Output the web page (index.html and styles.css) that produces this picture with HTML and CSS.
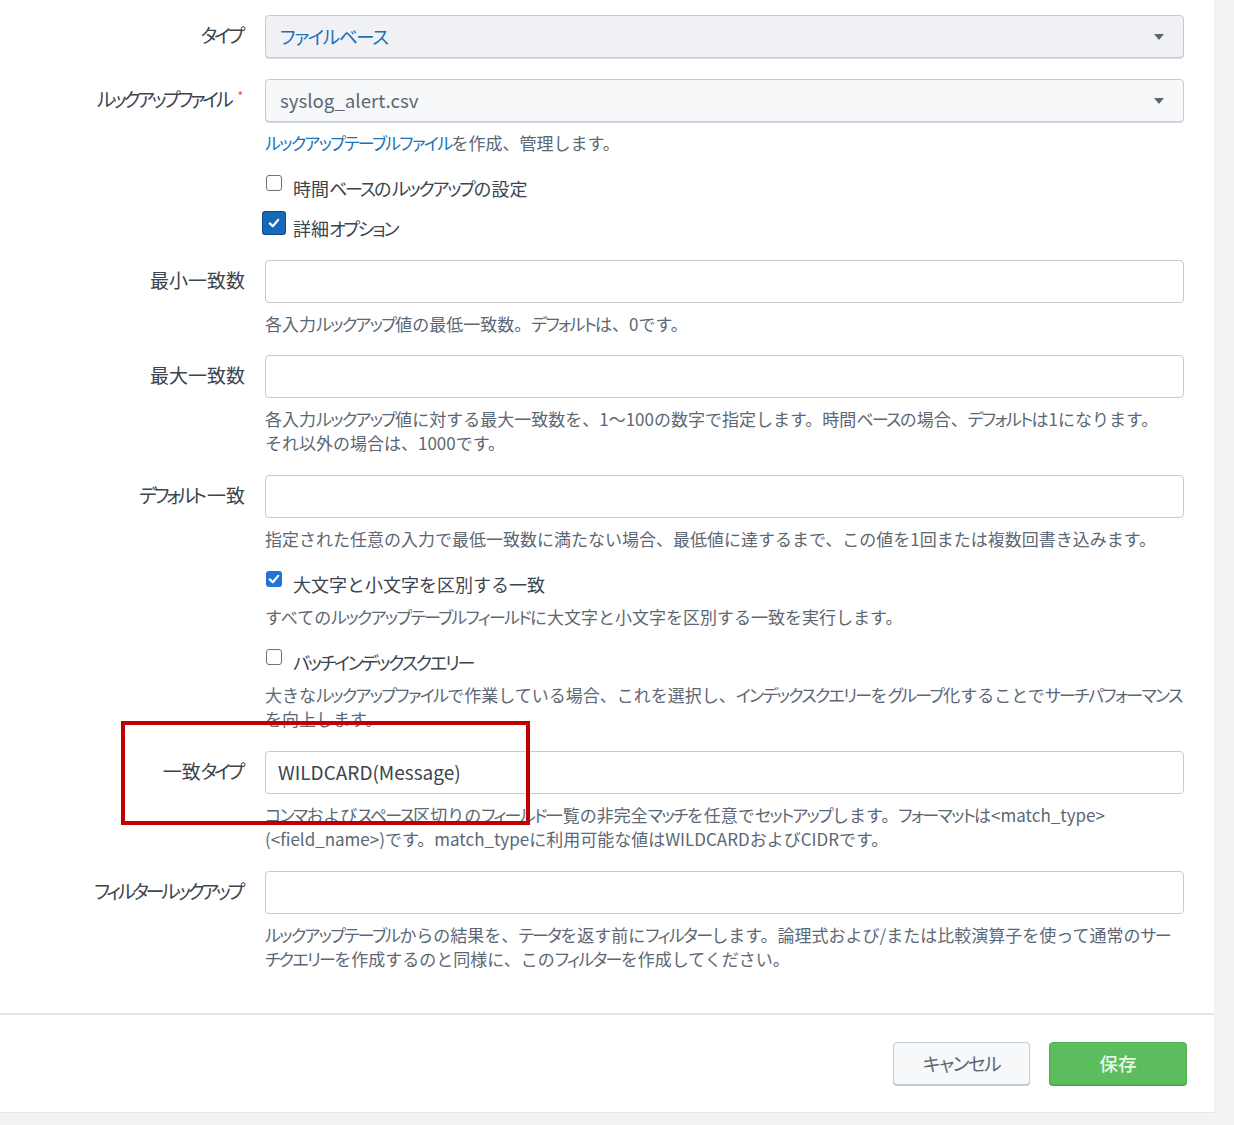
FILE: index.html
```html
<!DOCTYPE html>
<html lang="ja">
<head>
<meta charset="utf-8">
<title>ルックアップ定義</title>
<link rel="stylesheet" href="styles.css">
</head>
<body>
<div class="page">
  <div class="panel">
    <form class="form">
      <div class="field field-select-first">
        <div class="label"><span class="k">タイプ</span></div>
        <div class="control">
          <div class="select select-active"><span class="select-text text-blue"><span class="k">ファイルベース</span></span><span class="caret"></span></div>
        </div>
      </div>

      <div class="field">
        <div class="label"><span class="k">ルックアップファイル</span><span class="req">*</span></div>
        <div class="control">
          <div class="select"><span class="select-text">syslog_alert.csv</span><span class="caret"></span></div>
          <div class="help"><span class="link"><span class="k">ルックアップテーブルファイル</span></span>を作成、管理します。</div>
        </div>
      </div>

      <div class="field field-check field-tight">
        <div class="label"></div>
        <div class="control">
          <label class="check-row"><span class="box"></span><span class="check-label">時間<span class="k">ベース</span>の<span class="k">ルックアップ</span>の設定</span></label>
        </div>
      </div>

      <div class="field field-check field-after-check">
        <div class="label"></div>
        <div class="control">
          <label class="check-row"><span class="box box-checked box-focus"><svg viewBox="0 0 16 16" width="16" height="16"><path d="M3.8 8.4 L6.8 11.2 L12.2 4.9" fill="none" stroke="#fff" stroke-width="2.2" stroke-linecap="round" stroke-linejoin="round"/></svg></span><span class="check-label">詳細<span class="k">オプション</span></span></label>
        </div>
      </div>

      <div class="field field-min">
        <div class="label">最小一致数</div>
        <div class="control">
          <div class="input"></div>
          <div class="help">各入力<span class="k">ルックアップ</span>値の最低一致数。<span class="k">デフォルト</span>は、0です。</div>
        </div>
      </div>

      <div class="field">
        <div class="label">最大一致数</div>
        <div class="control">
          <div class="input"></div>
          <div class="help">各入力<span class="k">ルックアップ</span>値に対する最大一致数を、1～100の数字で指定します。時間<span class="k">ベース</span>の場合、<span class="k">デフォルト</span>は1になります。<br>それ以外の場合は、1000です。</div>
        </div>
      </div>

      <div class="field">
        <div class="label"><span class="k">デフォルト</span>一致</div>
        <div class="control">
          <div class="input"></div>
          <div class="help">指定された任意の入力で最低一致数に満たない場合、最低値に達するまで、この値を1回または複数回書き込みます。</div>
        </div>
      </div>

      <div class="field field-check">
        <div class="label"></div>
        <div class="control">
          <label class="check-row"><span class="box box-checked"><svg viewBox="0 0 16 16" width="16" height="16"><path d="M3.8 8.4 L6.8 11.2 L12.2 4.9" fill="none" stroke="#fff" stroke-width="2.2" stroke-linecap="round" stroke-linejoin="round"/></svg></span><span class="check-label">大文字と小文字を区別する一致</span></label>
          <div class="help help-check">すべての<span class="k">ルックアップテーブルフィールド</span>に大文字と小文字を区別する一致を実行します。</div>
        </div>
      </div>

      <div class="field field-check">
        <div class="label"></div>
        <div class="control">
          <label class="check-row"><span class="box"></span><span class="check-label"><span class="k">バッチインデックスクエリー</span></span></label>
          <div class="help help-check">大きな<span class="k">ルックアップファイル</span>で作業している場合、これを選択し、<span class="k">インデックスクエリー</span>を<span class="k">グループ</span>化することで<span class="k">サーチパフォーマンス</span><br>を向上します。</div>
        </div>
      </div>

      <div class="field">
        <div class="label">一致<span class="k">タイプ</span></div>
        <div class="control">
          <div class="input"><span class="input-text">WILDCARD(Message)</span></div>
          <div class="help"><span class="k">コンマ</span>および<span class="k">スペース</span>区切りの<span class="k">フィールド</span>一覧の非完全<span class="k">マッチ</span>を任意で<span class="k">セットアップ</span>します。<span class="k">フォーマット</span>は&lt;match_type&gt;<br>(&lt;field_name&gt;)です。match_typeに利用可能な値はWILDCARDおよびCIDRです。</div>
        </div>
      </div>

      <div class="field field-last">
        <div class="label"><span class="k">フィルタールックアップ</span></div>
        <div class="control">
          <div class="input"></div>
          <div class="help"><span class="k">ルックアップテーブル</span>からの結果を、<span class="k">テータ</span>を返す前に<span class="k">フィルター</span>します。論理式および/または比較演算子を使って通常の<span class="k">サー</span><br><span class="k">チクエリー</span>を作成するのと同様に、この<span class="k">フィルター</span>を作成してください。</div>
        </div>
      </div>
    </form>

    <div class="footer">
      <button type="button" class="btn btn-cancel"><span class="k">キャンセル</span></button>
      <button type="button" class="btn btn-save">保存</button>
    </div>
  </div>
  <div class="annotation"></div>
</div>
</body>
</html>
```

FILE: styles.css
```css
* { box-sizing: border-box; }

html, body {
  margin: 0;
  padding: 0;
}

body {
  background: #f2f3f5;
  font-family: "Noto Sans CJK JP", "Noto Sans", sans-serif;
  color: #3c444d;
}

/* katakana runs: proportional and condensed, like Meiryo UI */
.k {
  font-feature-settings: "palt";
  letter-spacing: -0.08em;
}

.page {
  position: relative;
  width: 1234px;
  height: 1125px;
}

.panel {
  width: 1214px;
  background: #ffffff;
  border-bottom: 1px solid #e3e6ea;
}

.form {
  padding: 15px 0 42px 0;
  margin: 0;
}

.field {
  display: grid;
  grid-template-columns: 245px 919px;
  column-gap: 20px;
  margin-bottom: 20px;
}

.field-select-first { margin-bottom: 21px; }
.field-tight { margin-bottom: 12px; }
.field-after-check { margin-bottom: 17px; }
.field-min { margin-bottom: 19px; }
.field-last { margin-bottom: 0; }

.label {
  text-align: right;
  font-size: 19px;
  height: 43px;
  line-height: 40px;
  color: #3c444d;
  white-space: nowrap;
}

.field-check .label { height: auto; }

.label .k { letter-spacing: -0.17em; }
.label .k:last-child { padding-right: 0.17em; }

.req {
  color: #d6563c;
  font-size: 12px;
  vertical-align: top;
  line-height: 34px;
  margin-left: 7px;
  margin-right: 2px;
}

.control {
  min-width: 0;
}

.select {
  height: 43px;
  border: 1px solid #c3cbd4;
  border-radius: 4px;
  background: #f7f8fa;
  display: flex;
  align-items: center;
  justify-content: space-between;
  padding: 0 19px 2px 14px;
  box-shadow: 0 1px 0 #d9dee4;
}

.select-active {
  background: #eff1f4;
}

.select-text {
  font-size: 18.7px;
  color: #5c6773;
}

.text-blue { color: #1a72b9; }

.caret {
  width: 0;
  height: 0;
  margin-top: 2px;
  border-left: 5px solid transparent;
  border-right: 5px solid transparent;
  border-top: 6px solid #5c6773;
}

.input {
  height: 43px;
  border: 1px solid #c3cbd4;
  border-radius: 4px;
  background: #ffffff;
  display: flex;
  align-items: center;
  padding: 0 12px 2px 12px;
}

.input-text {
  font-size: 19px;
  color: #3c444d;
}

.help {
  margin-top: 9px;
  font-size: 17px;
  line-height: 24px;
  color: #5c6773;
  white-space: nowrap;
}

.help .k { letter-spacing: -0.1em; }

.help-check { margin-top: 6px; }

.link { color: #1a72b9; }

.check-row {
  display: flex;
  align-items: flex-start;
  height: 28px;
}

.box {
  flex: none;
  width: 16px;
  height: 16px;
  margin: 0 11px 0 1px;
  border: 1.5px solid #707070;
  border-radius: 3px;
  background: #fff;
  display: flex;
  align-items: center;
  justify-content: center;
}

.box-checked {
  border: none;
  background: #1f74da;
}

.box-focus {
  background: #1668b8;
  border-radius: 1px;
  box-shadow: 0 0 0 3px #1668b8, 0 0 0 4px #0c4a86;
}

.check-label {
  font-size: 18px;
  line-height: 27px;
  color: #3c444d;
}

.check-label .k { letter-spacing: -0.12em; }

.footer {
  border-top: 2px solid #e4e8ec;
  display: flex;
  justify-content: flex-end;
  gap: 19px;
  padding: 27px 27px 27px 0;
}

.btn {
  height: 43px;
  width: 137px;
  border-radius: 4px;
  font-family: "Noto Sans CJK JP", sans-serif;
  font-size: 18.7px;
  padding: 0 0 3px 0;
  cursor: pointer;
}

.btn-cancel {
  background: #f7f8fa;
  border: 1px solid #c3cbd4;
  box-shadow: 0 1px 0 #c3cbd4;
  color: #5c6773;
}

.btn-save {
  width: 138px;
  background: #5cbd5c;
  border: 1px solid #53b153;
  box-shadow: 0 1px 0 #4aa34a;
  color: #eaf7ea;
  font-weight: 500;
}

.annotation {
  position: absolute;
  left: 121px;
  top: 721px;
  width: 409px;
  height: 104px;
  border: 4px solid #c00000;
  pointer-events: none;
}
```
